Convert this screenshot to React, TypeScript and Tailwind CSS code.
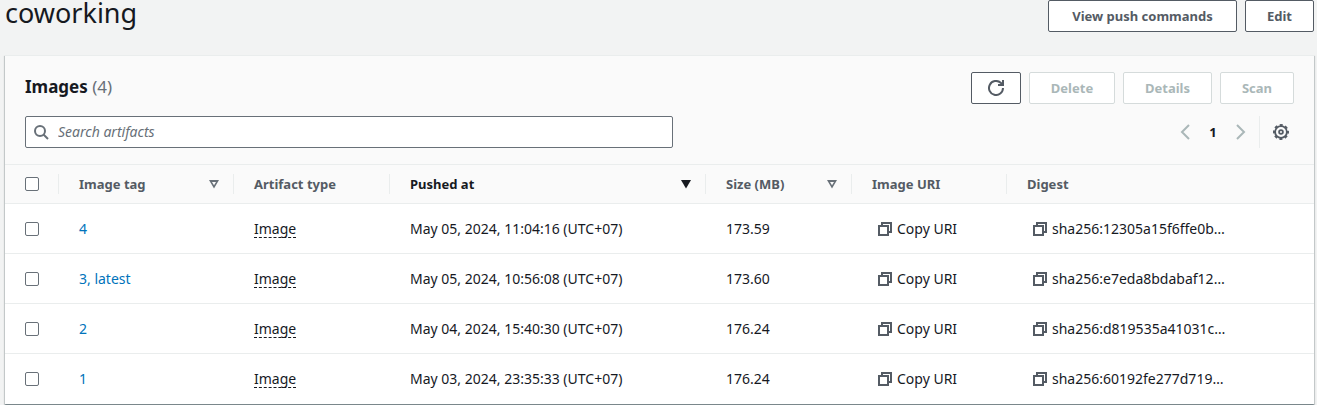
import { useState } from "react";
import type { ButtonHTMLAttributes, ReactNode } from "react";

type Artifact = { tag: string; pushedAt: string; size: string; digest: string };

const artifacts: Artifact[] = [
  { tag: "4", pushedAt: "May 05, 2024, 11:04:16 (UTC+07)", size: "173.59", digest: "sha256:12305a15f6ffe0b…" },
  { tag: "3, latest", pushedAt: "May 05, 2024, 10:56:08 (UTC+07)", size: "173.60", digest: "sha256:e7eda8bdabaf12…" },
  { tag: "2", pushedAt: "May 04, 2024, 15:40:30 (UTC+07)", size: "176.24", digest: "sha256:d819535a41031c…" },
  { tag: "1", pushedAt: "May 03, 2024, 23:35:33 (UTC+07)", size: "176.24", digest: "sha256:60192fe277d719…" },
];

function Button({ children, className = "", ...rest }: ButtonHTMLAttributes<HTMLButtonElement> & { children: ReactNode }) {
  return (
    <button
      type="button"
      className={`flex h-8 items-center justify-center rounded-xs border border-[#545b64] bg-white px-4 text-[13px] font-bold whitespace-nowrap text-[#545b64] disabled:border-[#d5dbdb] disabled:text-[#aab7b8] ${className}`}
      {...rest}
    >
      {children}
    </button>
  );
}

function Checkbox({ label }: { label: string }) {
  return (
    <input
      type="checkbox"
      aria-label={label}
      className="block size-3.5 appearance-none rounded-xs border border-[#687078] bg-white checked:bg-[#0073bb]"
    />
  );
}

function CopyIcon() {
  return (
    <svg viewBox="0 0 16 16" className="size-4 shrink-0" fill="none" stroke="#545b64" strokeWidth="2" aria-hidden="true">
      <path d="M2 5h9v9H2z" />
      <path d="M5 5V2h9v9h-3" />
    </svg>
  );
}

function SortIcon({ active = false }: { active?: boolean }) {
  return (
    <svg viewBox="0 0 16 16" className="size-4 shrink-0" aria-hidden="true">
      {active ? (
        <path d="M3 4h10L8 12.600z" fill="#16191f" stroke="none" />
      ) : (
        <path d="M3 4h10L8 12.600zM6 6l2 3.200L10 6z" fill="#687078" fillRule="evenodd" />
      )}
    </svg>
  );
}

function GearIcon() {
  return (
    <svg viewBox="0 0 16 16" className="size-4" fill="none" stroke="#545b64" aria-hidden="true">
      <circle cx="8" cy="8" r="5.900" strokeWidth="1.800" />
      <circle cx="8" cy="8" r="7" strokeWidth="2" strokeDasharray="3 2.498" strokeDashoffset="1.500" />
      <circle cx="8" cy="8" r="1.900" strokeWidth="1.800" />
    </svg>
  );
}

function HeaderCell({ children, sort, last = false }: { children: ReactNode; sort?: "active" | "idle"; last?: boolean }) {
  return (
    <th scope="col" className="h-[39px] p-0 text-left text-[13px] font-bold">
      <div
        className={`flex h-5 items-center justify-between pr-[11px] pl-5 ${last ? "" : "border-r border-[#eaeded]"} ${sort === "active" ? "text-[#16191f]" : "text-[#545b64]"}`}
      >
        <span className="whitespace-nowrap">{children}</span>
        {sort && (
          <button type="button" aria-label={`Sort by ${children}`}>
            <SortIcon active={sort === "active"} />
          </button>
        )}
      </div>
    </th>
  );
}

export default function App() {
  const [query, setQuery] = useState("");
  return (
    <main className="min-h-screen bg-[#f2f3f3] pr-[3px] pl-[5px] font-['Noto_Sans',sans-serif] text-sm leading-5 text-[#16191f]">
      <header className="flex items-start justify-between">
        <h1 className="text-[27px] leading-[26px]">coworking</h1>
        <div className="flex gap-2">
          <Button className="min-w-[189px]">View push commands</Button>
          <Button className="min-w-[69px]">Edit</Button>
        </div>
      </header>

      <section className="mt-[23px] border-t border-[#eaeded] bg-[#fafafa] shadow-[0_1px_1px_0_rgba(0,28,36,0.3),1px_1px_1px_0_rgba(0,28,36,0.15),-1px_1px_1px_0_rgba(0,28,36,0.15)]">
        <div className="px-5 py-4">
          <div className="flex items-start justify-between">
            <h2 className="text-[17px] leading-[30px] font-bold">
              Images <span className="font-normal text-[#687078]">(4)</span>
            </h2>
            <div className="flex gap-2">
              <Button className="min-w-[50px]" aria-label="Refresh">
                <svg viewBox="0 0 16 16" className="size-4" fill="none" stroke="currentColor" strokeWidth="2" aria-hidden="true">
                  <path d="M15 8a7 7 0 1 1-2.300-5.200L15 5" />
                  <path d="M10 5h5V0" />
                </svg>
              </Button>
              <Button className="min-w-[86px]" disabled>Delete</Button>
              <Button className="min-w-[89px]" disabled>Details</Button>
              <Button className="min-w-[74px]" disabled>Scan</Button>
            </div>
          </div>

          <div className="mt-3 flex items-center justify-between gap-4">
            <label className="flex h-8 max-w-[648px] flex-1 items-center gap-[9px] rounded-xs border border-[#687078] bg-white px-[7px]">
              <svg viewBox="0 0 16 16" className="size-4 shrink-0" fill="none" stroke="#687078" strokeWidth="2" aria-hidden="true">
                <circle cx="7" cy="7" r="5" />
                <path d="m10.500 10.500 4.500 4.500" />
              </svg>
              <input
                type="text"
                aria-label="Search artifacts"
                placeholder="Search artifacts"
                value={query}
                onChange={(e) => setQuery(e.target.value)}
                className="min-w-0 flex-1 bg-transparent outline-none placeholder:text-[#687078] placeholder:italic"
              />
            </label>
            <div className="flex items-center">
              <nav aria-label="Pages" className="flex h-8 items-center gap-3 border-r border-[#eaeded] pr-2.5">
                <button type="button" aria-label="Previous page" className="text-[#aab7b8]">
                  <svg viewBox="0 0 16 16" className="size-4" fill="none" stroke="currentColor" strokeWidth="2" aria-hidden="true">
                    <path d="M12 1 5 8l7 7" />
                  </svg>
                </button>
                <button type="button" aria-current="page" className="w-4 text-center text-[13px] font-bold">1</button>
                <button type="button" aria-label="Next page" className="text-[#aab7b8]">
                  <svg viewBox="0 0 16 16" className="size-4" fill="none" stroke="currentColor" strokeWidth="2" aria-hidden="true">
                    <path d="m4 1 7 7-7 7" />
                  </svg>
                </button>
              </nav>
              <button type="button" aria-label="Preferences" className="pr-[5px] pl-[13px]">
                <GearIcon />
              </button>
            </div>
          </div>
        </div>

        <table className="w-full table-fixed border-collapse">
          <colgroup>
            <col className="w-[54px]" />
            <col className="w-[175px]" />
            <col className="w-[156px]" />
            <col className="w-[316px]" />
            <col className="w-[146px]" />
            <col className="w-[155px]" />
            <col />
          </colgroup>
          <thead>
            <tr className="border-y border-[#eaeded]">
              <th scope="col" className="p-0">
                <div className="flex h-5 items-center border-r border-[#eaeded] pl-5">
                  <Checkbox label="Select all images" />
                </div>
              </th>
              <HeaderCell sort="idle">Image tag</HeaderCell>
              <HeaderCell>Artifact type</HeaderCell>
              <HeaderCell sort="active">Pushed at</HeaderCell>
              <HeaderCell sort="idle">Size (MB)</HeaderCell>
              <HeaderCell>Image URI</HeaderCell>
              <HeaderCell last>Digest</HeaderCell>
            </tr>
          </thead>
          <tbody className="bg-white whitespace-nowrap">
            {artifacts.map((a) => (
              <tr key={a.tag} className="h-[50px] border-b border-[#eaeded] last:border-b-0">
                <td className="p-0 pl-5">
                  <Checkbox label={`Select image ${a.tag}`} />
                </td>
                <td className="p-0 pl-5">
                  <a href="#" className="text-[#0073bb]">{a.tag}</a>
                </td>
                <td className="p-0 pl-5">
                  <span className="inline-block border-b border-dashed border-[#16191f] leading-[17px]">Image</span>
                </td>
                <td className="p-0 pl-5">{a.pushedAt}</td>
                <td className="p-0 pl-5">{a.size}</td>
                <td className="p-0 pl-[25px]">
                  <button type="button" className="flex items-center gap-1">
                    <CopyIcon />
                    Copy URI
                  </button>
                </td>
                <td className="p-0 pl-[25px]">
                  <button type="button" aria-label={`Copy digest ${a.digest}`} className="flex items-center gap-1">
                    <CopyIcon />
                    {a.digest}
                  </button>
                </td>
              </tr>
            ))}
          </tbody>
        </table>
      </section>
    </main>
  );
}
